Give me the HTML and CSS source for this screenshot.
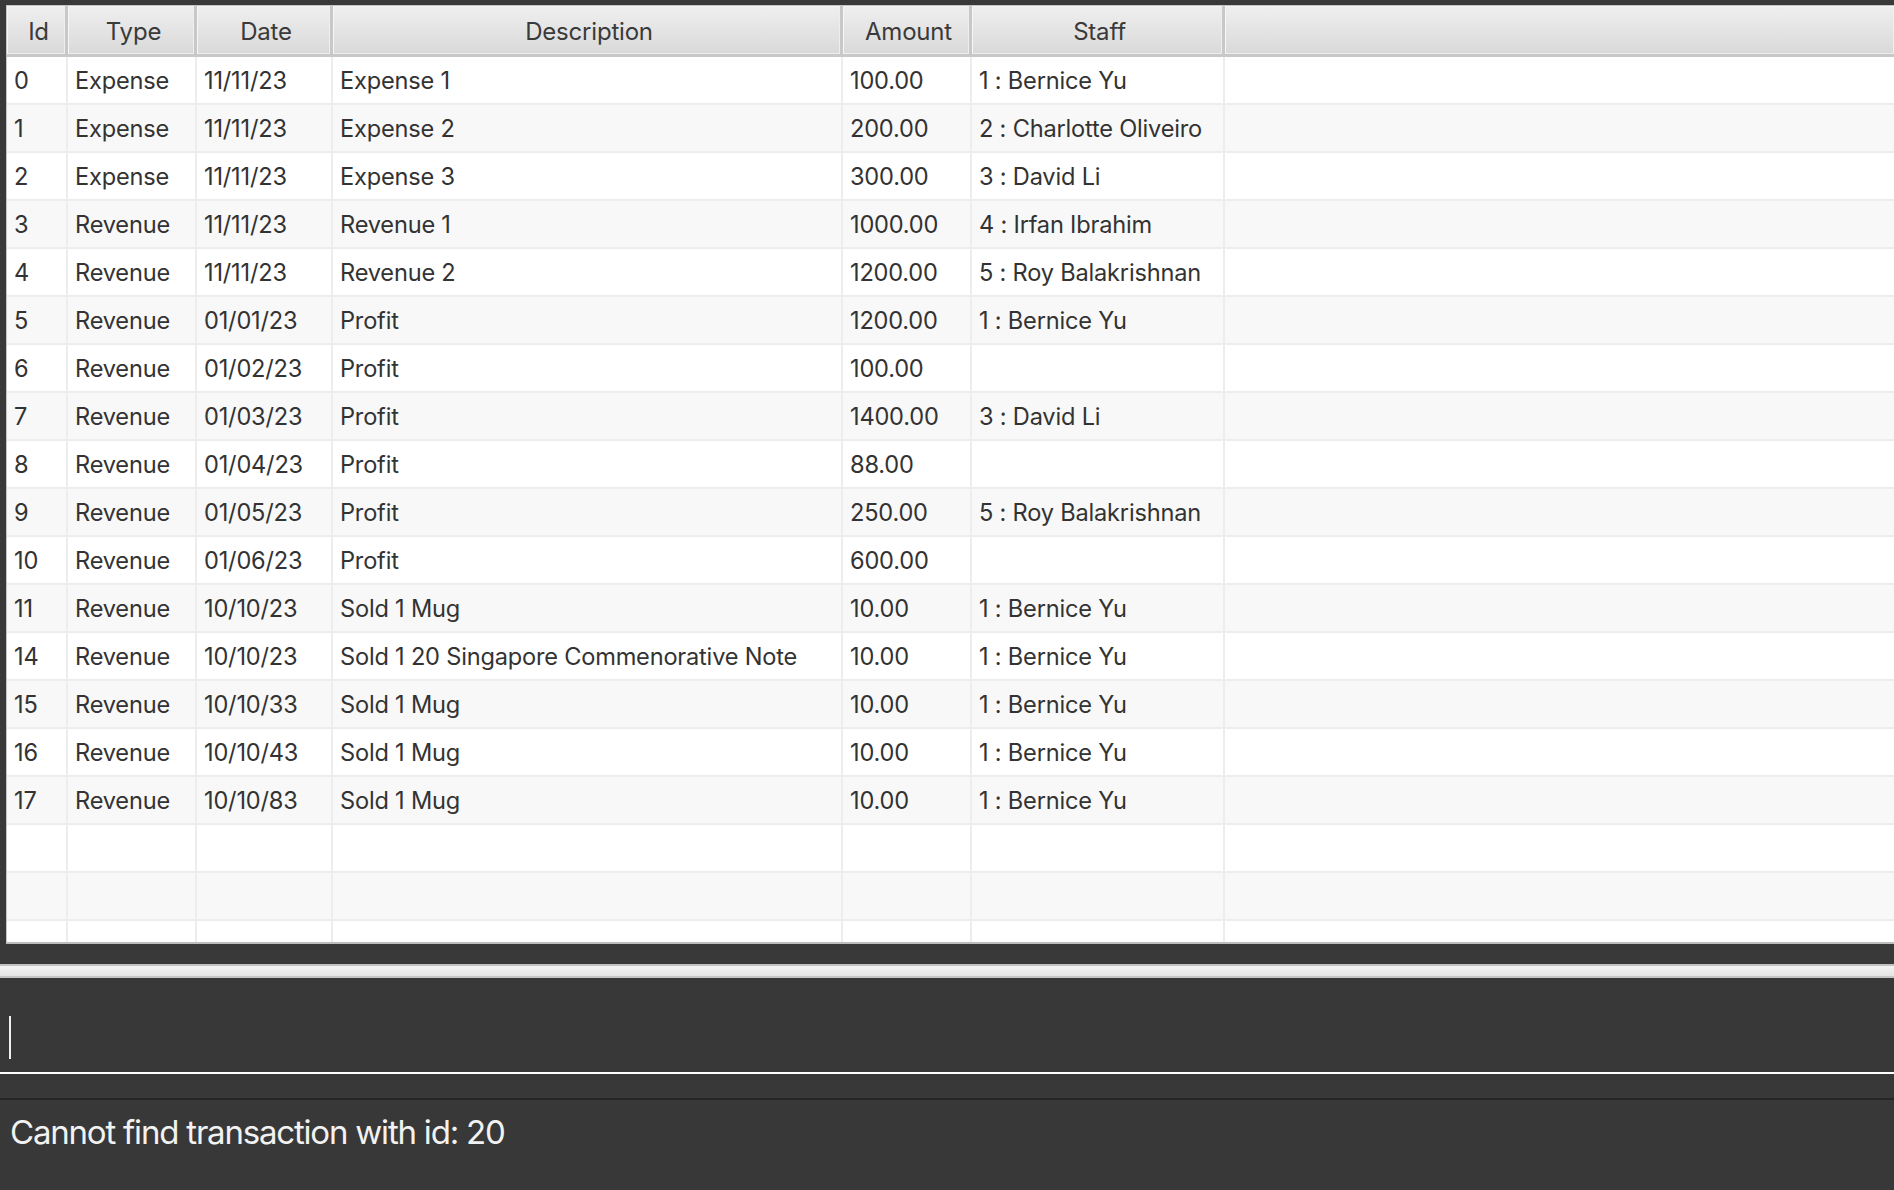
FILE: index.html
```html
<!DOCTYPE html>
<html>
<head>
<meta charset="utf-8">
<link rel="stylesheet" href="styles.css">
</head>
<body>
<div class="app">
  <div class="table-wrap">
    <div class="grid">
      <div class="row head">
        <div class="c c-id">Id</div><div class="c c-type">Type</div><div class="c c-date">Date</div><div class="c c-desc">Description</div><div class="c c-amt">Amount</div><div class="c c-staff">Staff</div><div class="c c-fill"></div>
      </div>
      <div class="row"><div class="c c-id">0</div><div class="c c-type">Expense</div><div class="c c-date">11/11/23</div><div class="c c-desc">Expense 1</div><div class="c c-amt">100.00</div><div class="c c-staff">1 : Bernice Yu</div><div class="c c-fill"></div></div>
      <div class="row"><div class="c c-id">1</div><div class="c c-type">Expense</div><div class="c c-date">11/11/23</div><div class="c c-desc">Expense 2</div><div class="c c-amt">200.00</div><div class="c c-staff">2 : Charlotte Oliveiro</div><div class="c c-fill"></div></div>
      <div class="row"><div class="c c-id">2</div><div class="c c-type">Expense</div><div class="c c-date">11/11/23</div><div class="c c-desc">Expense 3</div><div class="c c-amt">300.00</div><div class="c c-staff">3 : David Li</div><div class="c c-fill"></div></div>
      <div class="row"><div class="c c-id">3</div><div class="c c-type">Revenue</div><div class="c c-date">11/11/23</div><div class="c c-desc">Revenue 1</div><div class="c c-amt">1000.00</div><div class="c c-staff">4 : Irfan Ibrahim</div><div class="c c-fill"></div></div>
      <div class="row"><div class="c c-id">4</div><div class="c c-type">Revenue</div><div class="c c-date">11/11/23</div><div class="c c-desc">Revenue 2</div><div class="c c-amt">1200.00</div><div class="c c-staff">5 : Roy Balakrishnan</div><div class="c c-fill"></div></div>
      <div class="row"><div class="c c-id">5</div><div class="c c-type">Revenue</div><div class="c c-date">01/01/23</div><div class="c c-desc">Profit</div><div class="c c-amt">1200.00</div><div class="c c-staff">1 : Bernice Yu</div><div class="c c-fill"></div></div>
      <div class="row"><div class="c c-id">6</div><div class="c c-type">Revenue</div><div class="c c-date">01/02/23</div><div class="c c-desc">Profit</div><div class="c c-amt">100.00</div><div class="c c-staff"></div><div class="c c-fill"></div></div>
      <div class="row"><div class="c c-id">7</div><div class="c c-type">Revenue</div><div class="c c-date">01/03/23</div><div class="c c-desc">Profit</div><div class="c c-amt">1400.00</div><div class="c c-staff">3 : David Li</div><div class="c c-fill"></div></div>
      <div class="row"><div class="c c-id">8</div><div class="c c-type">Revenue</div><div class="c c-date">01/04/23</div><div class="c c-desc">Profit</div><div class="c c-amt">88.00</div><div class="c c-staff"></div><div class="c c-fill"></div></div>
      <div class="row"><div class="c c-id">9</div><div class="c c-type">Revenue</div><div class="c c-date">01/05/23</div><div class="c c-desc">Profit</div><div class="c c-amt">250.00</div><div class="c c-staff">5 : Roy Balakrishnan</div><div class="c c-fill"></div></div>
      <div class="row"><div class="c c-id">10</div><div class="c c-type">Revenue</div><div class="c c-date">01/06/23</div><div class="c c-desc">Profit</div><div class="c c-amt">600.00</div><div class="c c-staff"></div><div class="c c-fill"></div></div>
      <div class="row"><div class="c c-id">11</div><div class="c c-type">Revenue</div><div class="c c-date">10/10/23</div><div class="c c-desc">Sold 1 Mug</div><div class="c c-amt">10.00</div><div class="c c-staff">1 : Bernice Yu</div><div class="c c-fill"></div></div>
      <div class="row"><div class="c c-id">14</div><div class="c c-type">Revenue</div><div class="c c-date">10/10/23</div><div class="c c-desc">Sold 1 20 Singapore Commenorative Note</div><div class="c c-amt">10.00</div><div class="c c-staff">1 : Bernice Yu</div><div class="c c-fill"></div></div>
      <div class="row"><div class="c c-id">15</div><div class="c c-type">Revenue</div><div class="c c-date">10/10/33</div><div class="c c-desc">Sold 1 Mug</div><div class="c c-amt">10.00</div><div class="c c-staff">1 : Bernice Yu</div><div class="c c-fill"></div></div>
      <div class="row"><div class="c c-id">16</div><div class="c c-type">Revenue</div><div class="c c-date">10/10/43</div><div class="c c-desc">Sold 1 Mug</div><div class="c c-amt">10.00</div><div class="c c-staff">1 : Bernice Yu</div><div class="c c-fill"></div></div>
      <div class="row"><div class="c c-id">17</div><div class="c c-type">Revenue</div><div class="c c-date">10/10/83</div><div class="c c-desc">Sold 1 Mug</div><div class="c c-amt">10.00</div><div class="c c-staff">1 : Bernice Yu</div><div class="c c-fill"></div></div>
      <div class="row"><div class="c c-id"></div><div class="c c-type"></div><div class="c c-date"></div><div class="c c-desc"></div><div class="c c-amt"></div><div class="c c-staff"></div><div class="c c-fill"></div></div>
      <div class="row"><div class="c c-id"></div><div class="c c-type"></div><div class="c c-date"></div><div class="c c-desc"></div><div class="c c-amt"></div><div class="c c-staff"></div><div class="c c-fill"></div></div>
      <div class="row"><div class="c c-id"></div><div class="c c-type"></div><div class="c c-date"></div><div class="c c-desc"></div><div class="c c-amt"></div><div class="c c-staff"></div><div class="c c-fill"></div></div>
    </div>
  </div>
  <div class="gap"></div>
  <div class="splitter"></div>
  <div class="command">
    <div class="input"><span class="caret"></span></div>
  </div>
  <div class="result">Cannot find transaction with id: 20</div>
</div>
</body>
</html>
```
FILE: styles.css
```css
html, body {
  margin: 0;
  padding: 0;
  background: #393939;
  overflow: hidden;
}
.app {
  width: 1894px;
  height: 1190px;
  display: flex;
  flex-direction: column;
  font-family: Inter, "Noto Sans", sans-serif;
}
.table-wrap {
  margin: 5px 0 0 6px;
  height: 936px;
  flex: none;
  background: #fff;
  border-top: 1px solid #c4c4c4;
  border-left: 1px solid #c4c4c4;
  border-bottom: 2px solid #bdbdbd;
  overflow: hidden;
}
.grid {
  display: flex;
  flex-direction: column;
}
.row {
  display: flex;
  height: 48px;
  flex: none;
  background: #fff;
  box-sizing: border-box;
  border-bottom: 2px solid #ededed;
}
.row:nth-child(odd) {
  background: #f8f8f8;
}
.row.head {
  height: 51px;
  background: linear-gradient(#efefef, #d9d9d9);
  border-bottom: 3px solid #c8c8c8;
}
.c {
  box-sizing: border-box;
  flex: none;
  border-right: 2px solid #ededed;
  padding-left: 7px;
  display: flex;
  align-items: center;
  font-size: 23.6px;
  color: #333;
  white-space: nowrap;
  letter-spacing: -0.2px;
}
.head .c {
  justify-content: center;
  padding-left: 5px;
  border-right: 3px solid #c8c8c8;
  box-shadow: inset 1px 1px 0 #f6f6f6, inset -1px -1px 0 #eeeeee;
  color: #3a3a3a;
  padding-top: 3px;
  font-size: 24px;
}
.c-id { width: 61px; }
.c-type { width: 129px; }
.c-date { width: 136px; }
.c-desc { width: 510px; }
.c-amt { width: 129px; }
.c-staff { width: 253px; }
.c-fill { flex: 1; border-right: none; }
.head .c-fill { border-right: none; }
.gap {
  height: 20px;
  flex: none;
}
.splitter {
  height: 14px;
  flex: none;
  box-sizing: border-box;
  border-top: 2px solid #c2c2c2;
  border-bottom: 2px solid #c6c6c6;
  background: linear-gradient(#f4f4f4, #e4e4e4);
}
.command {
  height: 122px;
  flex: none;
  background: #383838;
  border-bottom: 2px solid #262626;
  box-sizing: border-box;
  padding-bottom: 24px;
  display: flex;
  flex-direction: column;
}
.input {
  flex: 1;
  border-bottom: 2px solid #ffffff;
  display: flex;
  align-items: flex-start;
  padding: 38px 0 0 9px;
}
.caret {
  width: 2px;
  height: 43px;
  background: #f0f0f0;
}
.result {
  flex: 1;
  background: #383838;
  color: #f2f2f2;
  font-size: 33px;
  padding: 13px 0 0 10px;
  letter-spacing: -1.2px;
  line-height: 1.2;
}
```
